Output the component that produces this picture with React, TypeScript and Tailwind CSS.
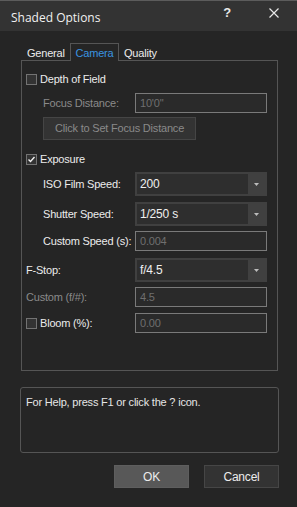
const font = { fontFamily: '"Liberation Sans", Arial, sans-serif' };

function CheckBox({ checked }: { checked?: boolean }) {
  return (
    <div className="w-[11px] h-[11px] border border-[#737373] bg-[#333333] flex items-center justify-center shrink-0">
      {checked && (
        <svg width="9" height="9" viewBox="0 0 9 9">
          <path d="M1.5 4.5 L3.5 6.5 L7.5 2" stroke="#f2f2f2" strokeWidth="1.4" fill="none" />
        </svg>
      )}
    </div>
  );
}

function TextBox({ value }: { value: string }) {
  return (
    <div className="w-[132px] h-[20px] border border-[#7a7a7a] bg-[#2a2a2a] flex items-center pl-[4px] text-[#6f6f6f]">
      {value}
    </div>
  );
}

function Select({ value }: { value: string }) {
  return (
    <div className="w-[132px] h-[24px] bg-[#404040] flex p-[2px]">
      <div className="flex-1 bg-[#2e2e2e] flex items-center pl-[3px] text-[#f0f0f0] text-[12px]">{value}</div>
      <div className="w-[17px] flex items-center justify-center">
        <svg width="5" height="3" viewBox="0 0 5 3">
          <path d="M0 0 H5 L2.5 3 Z" fill="#bdbdbd" />
        </svg>
      </div>
    </div>
  );
}

export default function App() {
  return (
    <div className="w-[297px] h-[507px] bg-[#252525] text-[11px] tracking-[-0.2px] text-[#ececec] flex flex-col" style={font}>
      {/* Title bar */}
      <div className="h-[31px] bg-[#333333] border-t border-[#5c5c5c] flex items-center pl-[11px] pr-[18px] shrink-0">
        <span className="text-[12px] tracking-normal text-[#f0f0f0] flex-1 mt-[4px]" style={{ fontFamily: '"Open Sans", "Noto Sans", sans-serif' }}>
          Shaded Options
        </span>
        <span className="text-[13px] font-bold text-[#e8e8e8] mr-[38px] -mt-[6px]">?</span>
        <svg width="10" height="10" viewBox="0 0 10 10" className="-mt-[6px]">
          <path d="M0.5 0.5 L9.5 9.5 M9.5 0.5 L0.5 9.5" stroke="#e8e8e8" strokeWidth="1.2" />
        </svg>
      </div>

      {/* Tabs */}
      <div className="mt-[12px] ml-[21px] flex items-end h-[18px] relative z-10">
        <div className="w-[49px] pl-[6px] h-[17px] flex items-center pt-[1px]">General</div>
        <div className="w-[49px] h-[18px] border border-b-0 border-[#555555] bg-[#252525] flex items-center justify-center pt-[1px] text-[#3a94e0]">
          Camera
        </div>
        <div className="pl-[5px] h-[17px] flex items-center pt-[1px]">Quality</div>
      </div>

      {/* Panel */}
      <div className="-mt-[1px] ml-[21px] w-[257px] h-[311px] border border-[#555555] flex flex-col shrink-0">
        <div className="mt-[11px] h-[14px] flex items-center gap-[3px] pl-[4px]">
          <CheckBox />
          <span>Depth of Field</span>
        </div>
        <div className="mt-[7px] flex items-center pl-[21px]">
          <span className="w-[92px] text-[#8a8a8a]">Focus Distance:</span>
          <TextBox value={"10'0\""} />
        </div>
        <div className="mt-[4px] ml-[21px] w-[153px] h-[23px] bg-[#333333] border border-[#454545] flex items-center justify-center text-[#8a8a8a]">
          Click to Set Focus Distance
        </div>
        <div className="mt-[12px] h-[14px] flex items-center gap-[3px] pl-[4px]">
          <CheckBox checked />
          <span>Exposure</span>
        </div>
        <div className="mt-[6px] flex items-center pl-[21px]">
          <span className="w-[92px]">ISO Film Speed:</span>
          <Select value="200" />
        </div>
        <div className="mt-[6px] flex items-center pl-[21px]">
          <span className="w-[92px]">Shutter Speed:</span>
          <Select value="1/250 s" />
        </div>
        <div className="mt-[5px] flex items-center pl-[21px]">
          <span className="w-[92px]">Custom Speed (s):</span>
          <TextBox value="0.004" />
        </div>
        <div className="mt-[7px] flex items-center pl-[4px]">
          <span className="w-[109px]">F-Stop:</span>
          <Select value="f/4.5" />
        </div>
        <div className="mt-[5px] flex items-center pl-[4px]">
          <span className="w-[109px] text-[#8a8a8a]">Custom (f/#):</span>
          <TextBox value="4.5" />
        </div>
        <div className="mt-[6px] flex items-center pl-[4px]">
          <div className="w-[109px] flex items-center gap-[3px]">
            <CheckBox />
            <span>Bloom (%):</span>
          </div>
          <TextBox value="0.00" />
        </div>
      </div>

      {/* Help box */}
      <div className="mt-[16px] ml-[20px] w-[259px] h-[66px] border border-[#555555] rounded-[3px] pl-[5px] pt-[6px] text-[#e6e6e6]">
        For Help, press F1 or click the ? icon.
      </div>

      {/* Buttons */}
      <div className="mt-[12px] ml-[114px] flex gap-[15px]">
        <div className="w-[75px] h-[23px] bg-[#585858] border border-[#5e5e5e] flex items-center justify-center text-[12px]">OK</div>
        <div className="w-[75px] h-[23px] bg-[#333333] border border-[#464646] flex items-center justify-center text-[12px]">Cancel</div>
      </div>
    </div>
  );
}
